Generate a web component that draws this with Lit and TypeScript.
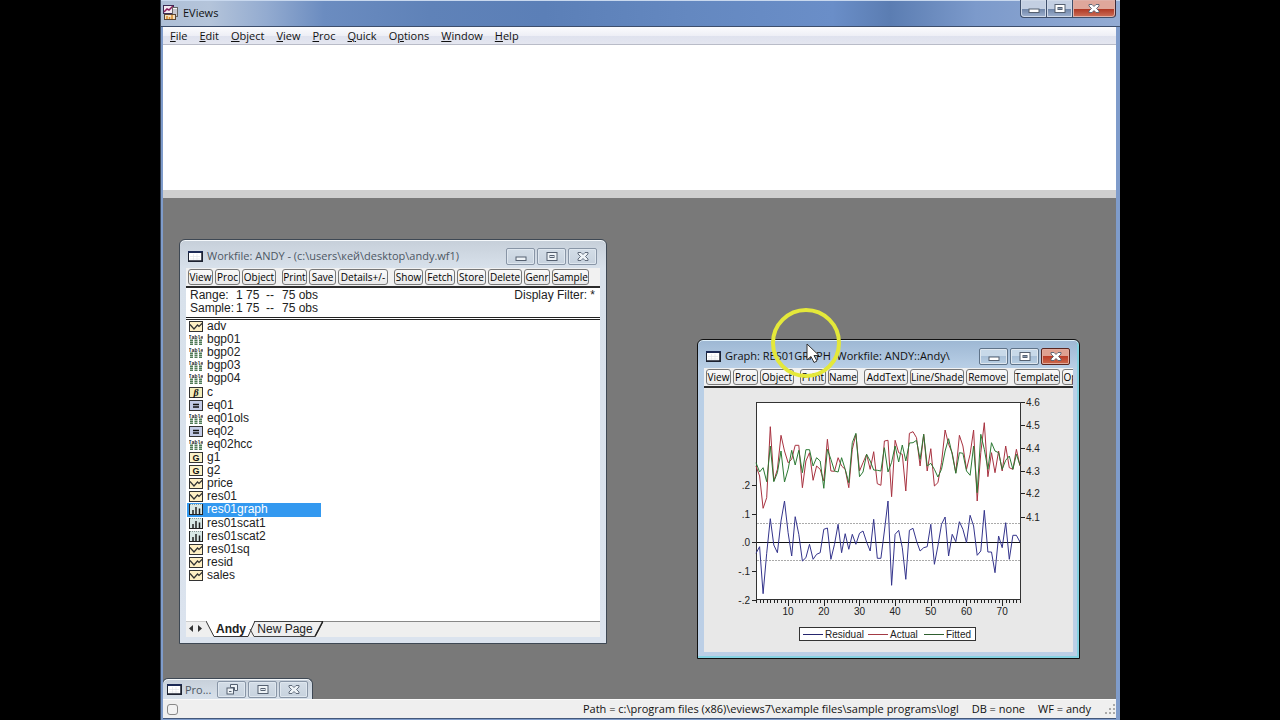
import { LitElement, html, svg, css } from "lit";
import { customElement, property } from "lit/decorators.js";
import { classMap } from "lit/directives/class-map.js";

type Kind = "series" | "table" | "coef" | "equation" | "group" | "graph";

const MENU = ["File", "Edit", "Object", "View", "Proc", "Quick", "Options", "Window", "Help"];

const WORKFILE_TOOLS: [string, number][][] = [
  [["View", 25], ["Proc", 25], ["Object", 34]],
  [["Print", 25], ["Save", 27], ["Details+/-", 50]],
  [["Show", 29], ["Fetch", 30], ["Store", 29], ["Delete", 34], ["Genr", 26], ["Sample", 37]],
];

const GRAPH_TOOLS: [string, number][][] = [
  [["View", 25], ["Proc", 25], ["Object", 34]],
  [["Print", 26], ["Name", 30]],
  [["AddText", 44], ["Line/Shade", 54], ["Remove", 42]],
  [["Template", 46], ["Options", 40]],
];

const OBJECTS: [Kind, string][] = [
  ["series", "adv"],
  ["table", "bgp01"],
  ["table", "bgp02"],
  ["table", "bgp03"],
  ["table", "bgp04"],
  ["coef", "c"],
  ["equation", "eq01"],
  ["table", "eq01ols"],
  ["equation", "eq02"],
  ["table", "eq02hcc"],
  ["group", "g1"],
  ["group", "g2"],
  ["series", "price"],
  ["series", "res01"],
  ["graph", "res01graph"],
  ["graph", "res01scat1"],
  ["graph", "res01scat2"],
  ["series", "res01sq"],
  ["series", "resid"],
  ["series", "sales"],
];

/* Plot heights of the 75 observations, three units to a pixel, 33 is the top of the frame. */
const RESIDUAL = [
  487, 467, 608, 487, 383, 462, 485, 390, 330, 425, 495, 377, 430, 510, 500, 460, 505, 490, 485, 415,
  411, 505, 460, 400, 485, 428, 475, 430, 460, 427, 420, 453, 480, 385, 502, 502, 420, 330, 583, 430,
  418, 470, 565, 418, 412, 450, 480, 470, 467, 400, 520, 465, 400, 378, 495, 430, 452, 392, 415, 455,
  373, 405, 493, 480, 358, 483, 483, 545, 435, 470, 395, 505, 433, 433, 453,
];
const ACTUAL = [
  225, 255, 352, 320, 107, 270, 235, 133, 180, 215, 205, 163, 163, 290, 210, 185, 268, 225, 235, 270,
  145, 240, 241, 200, 225, 235, 290, 175, 130, 240, 215, 190, 235, 182, 278, 283, 150, 148, 317, 148,
  185, 190, 300, 127, 122, 140, 225, 130, 240, 173, 285, 275, 215, 117, 160, 185, 245, 133, 165, 235,
  190, 117, 330, 185, 95, 257, 185, 245, 180, 240, 165, 230, 235, 175, 225,
];
const FITTED = [
  215, 243, 230, 272, 165, 272, 245, 180, 273, 235, 178, 222, 178, 245, 176, 176, 225, 200, 210, 292,
  175, 205, 240, 243, 200, 235, 275, 155, 127, 257, 243, 190, 210, 237, 238, 240, 170, 243, 214, 165,
  213, 162, 210, 156, 155, 148, 205, 130, 225, 217, 235, 258, 235, 180, 143, 190, 247, 185, 187, 240,
  253, 165, 305, 130, 175, 235, 155, 180, 185, 235, 208, 195, 235, 190, 223,
];

const obsX = (i: number) => 52 + ((i - 1) * 264) / 74;
const line = (s: number[]) => s.map((v, i) => `${obsX(i + 1).toFixed(1)},${(v / 3 + 3).toFixed(1)}`).join(" ");

const objectIcon = (kind: Kind) => {
  switch (kind) {
    case "series":
      return html`<svg width="14" height="11" viewBox="0 0 14 11"><rect x=".5" y=".5" width="13" height="10" fill="#fff0c4" stroke="#333"/><path d="M1 3.5l4 4.500 3.500-4 1.500 1.500 3.500-3.500" fill="none" stroke="#333" stroke-width="1.200"/></svg>`;
    case "table":
      return html`<svg width="14" height="11" viewBox="0 0 14 11"><text x="-.5" y="4.500" font-family="Liberation Mono" font-weight="700" font-size="5" fill="#222">Table</text><path d="M1 6.300h12M1 8.300h12M1 10.300h12" stroke="#4f7a56" stroke-width="1.400" stroke-dasharray="3 1.500"/></svg>`;
    case "coef":
      return html`<svg width="14" height="11" viewBox="0 0 14 11"><rect x=".5" y=".5" width="13" height="10" fill="#f4eebc" stroke="#333"/><text x="7" y="8.500" text-anchor="middle" font-family="Liberation Serif" font-style="italic" font-weight="700" font-size="10" fill="#111">β</text></svg>`;
    case "equation":
      return html`<svg width="14" height="11" viewBox="0 0 14 11"><rect x=".5" y=".5" width="13" height="10" fill="#c3cbe6" stroke="#333"/><path d="M4 4.500h6M4 7h6" stroke="#111" stroke-width="1.400"/></svg>`;
    case "group":
      return html`<svg width="14" height="11" viewBox="0 0 14 11"><rect x=".5" y=".5" width="13" height="10" fill="#fbf2c8" stroke="#333"/><text x="7" y="8.700" text-anchor="middle" font-family="Liberation Sans" font-weight="700" font-size="9" fill="#111">G</text></svg>`;
    case "graph":
      return html`<svg width="14" height="11" viewBox="0 0 14 11"><rect width="14" height="11" fill="#d9e9e6"/><path d="M.5 0v11M0 10.500h14M13.500 0v11" stroke="#222" fill="none"/><path d="M1 .5h12" stroke="#8a9a98" stroke-dasharray="1 1"/><path d="M4 10V6M7 10V3M10.500 10V4.500" stroke="#222" stroke-width="1.500"/></svg>`;
  }
};

const sheetIcon = html`<svg width="15" height="11" viewBox="0 0 15 11"><rect x=".5" y=".5" width="14" height="10" fill="#fff" stroke="#1c2230"/><path d="M0 1h15" stroke="#1c2a55" stroke-width="2"/><path d="M14 1v10M1 10h14" stroke="#1c2230" stroke-width="1.500"/><path d="M2 5.500h10M2 8h10M5.500 3v6M9 3v6" stroke="#dde0e6" stroke-width=".6"/></svg>`;

@customElement("caption-buttons")
export class CaptionButtons extends LitElement {
  @property() variant: "plain" | "active" | "docked" | "main" = "plain";

  static styles = css`
    :host { display: flex; gap: 2px; }
    button {
      width: 29px; height: 17px; padding: 0; display: grid; place-items: center;
      border: 1px solid #8895a6; border-radius: 2px; box-sizing: border-box;
      background: linear-gradient(#d3dde7, #c7d2de);
      box-shadow: inset 0 0 0 1px #dfe7ef;
    }
    svg { display: block; }
    .active { background: linear-gradient(#c8d9e9 45%, #a9c0d8 50%, #bad0e4); border-color: #5f7389; }
    .active.close { background: linear-gradient(#dfa191 45%, #bc3f2a 50%, #cc6a4d); border-color: #5a2620; box-shadow: inset 0 0 0 1px #e2ab9d; }
    :host([variant="main"]) { gap: 0; }
    .main {
      width: 26px; height: 18px; border-color: #3e4f6b; border-top: 0; border-radius: 0; border-right: 0;
      background: linear-gradient(#c3cfe2 50%, #7187a9 55%, #9fb2d0); box-shadow: inset 0 0 0 1px #cfd9e8;
    }
    .main.minimize { border-radius: 0 0 0 4px; }
    .main.close {
      width: 44px; border-right: 1px solid #3e2a35; border-radius: 0 0 4px 0;
      background: linear-gradient(#dfa79b 50%, #b03a26 55%, #cd705a); box-shadow: inset 0 0 0 1px #dfb0a8;
    }
  `;

  render() {
    const v = this.variant;
    const solid = v === "active" || v === "main";
    const ink = "#556070";
    const fill = solid ? "#fff" : "#eef3f7";
    const c = (name: string) => classMap({ [v]: true, [name]: true });
    return html`
      <button class=${c("minimize")} aria-label=${v === "docked" ? "Restore" : "Minimize"}>
        ${v === "docked"
          ? html`<svg width="12" height="11" viewBox="0 0 12 11"><path d="M4.500.5h7v6h-3v-3h-4z" fill=${fill} stroke=${ink}/><rect x="1" y="4" width="6.500" height="6" fill=${fill} stroke=${ink}/><path d="M3 7.500h2.500" stroke=${ink}/></svg>`
          : html`<svg width="12" height="11" viewBox="0 0 12 11"><rect x="1" y="6" width="10" height="3.500" fill=${fill} stroke=${ink}/></svg>`}
      </button>
      <button class=${c("maximize")} aria-label="Maximize">
        <svg width="12" height="11" viewBox="0 0 12 11"><rect x="1" y="1.500" width="10" height="8" fill=${fill} stroke=${ink}/><rect x="4" y="4.500" width="4" height="2" fill=${solid ? "#8899b0" : "#dfe6ee"} stroke=${ink}/></svg>
      </button>
      <button class=${c("close")} aria-label="Close">
        <svg width="12" height="11" viewBox="0 0 12 11"><path d="M1 1.500h3l2 2 2-2h3v1.500L8.500 5.500 11 8v1.500H8l-2-2-2 2H1V8l2.500-2.500L1 3z" fill=${fill} stroke=${ink} stroke-width=".9"/></svg>
      </button>`;
  }
}

@customElement("tool-strip")
export class ToolStrip extends LitElement {
  @property({ attribute: false }) groups: [string, number][][] = [];

  static styles = css`
    :host {
      display: flex; gap: 6px; height: 20px; padding: 1px 1px 1px 2px; box-sizing: border-box; overflow: hidden;
      background: #f1f1f1; border-bottom: 2px solid #2b2b2b;
    }
    .group { display: flex; gap: 2px; flex: none; }
    button {
      flex: none; height: 16px; padding: 0; box-sizing: border-box; white-space: nowrap;
      display: flex; justify-content: center; align-items: center;
      border: 1px solid #777; border-radius: 3px; background: linear-gradient(#fafafa, #e9e9e9);
      font: 10px/14px "Open Sans", "Noto Sans", sans-serif; color: #000;
    }
  `;

  render() {
    return this.groups.map(
      (g) => html`<div class="group">
        ${g.map(([label, width]) => html`<button style="width:${width}px">${label}</button>`)}
      </div>`
    );
  }
}

@customElement("residual-chart")
export class ResidualChart extends LitElement {
  static styles = css`
    :host { display: block; background: #e8e8e8; }
    svg { display: block; }
    text { font: 10px "Liberation Sans", Arial, sans-serif; fill: #222; }
  `;

  render() {
    const ticks = Array.from({ length: 75 }, (_, i) => i + 1);
    const left: [string, number][] = [[".2", 97], [".1", 126], [".0", 154], ["-.1", 183], ["-.2", 212]];
    const right: [string, number][] = [["4.6", 14], ["4.5", 37], ["4.4", 60], ["4.3", 83], ["4.2", 105], ["4.1", 129]];
    const legend: [string, string, number][] = [["Residual", "#26266e", 99], ["Actual", "#a33a44", 164], ["Fitted", "#2f5f2f", 220]];
    return html`<svg width="368" height="264" viewBox="0 0 368 264" role="img" aria-label="Residual, Actual, Fitted">
      <rect x="52.5" y="14.500" width="264" height="197" fill="#fff" stroke="#333"/>
      <path d="M53 135.500h263M53 172.500h263" stroke="#aaa" stroke-dasharray="2 1"/>
      <path d="M53 154.500h263" stroke="#111"/>
      <polyline points=${line(ACTUAL)} fill="none" stroke="#a83240"/>
      <polyline points=${line(FITTED)} fill="none" stroke="#2c7a34"/>
      <polyline points=${line(RESIDUAL)} fill="none" stroke="#34348c"/>
      ${ticks.map((i) => svg`<path d="M${Math.round(obsX(i)) + 0.5} 212v${i % 10 ? 3 : 6}" stroke="#222"/>`)}
      ${[10, 20, 30, 40, 50, 60, 70].map((i) => svg`<text x=${obsX(i)} y="227" text-anchor="middle">${i}</text>`)}
      ${left.map(([t, y]) => svg`<path d="M48 ${y + 0.5}h4" stroke="#222"/><text x="46" y=${y + 4} text-anchor="end">${t}</text>`)}
      ${right.map(([t, y]) => svg`<path d="M317 ${y + 0.5}h4" stroke="#222"/><text x="322" y=${y + 4}>${t}</text>`)}
      <rect x="95.500" y="239.500" width="176" height="13" fill="#fff" stroke="#333"/>
      ${legend.map(([t, c, x]) => svg`<path d="M${x} 246.500h20" stroke=${c}/><text x=${x + 22} y="250">${t}</text>`)}
    </svg>`;
  }
}

@customElement("app-root")
export class AppRoot extends LitElement {
  static styles = css`
    :host {
      display: block; height: 100vh; box-sizing: border-box; padding: 0 12.5%; overflow: hidden; background: #000;
      font: 11px/16px "Open Sans", "Noto Sans", sans-serif; color: #111;
    }
    button { font: inherit; color: inherit; border: 0; background: none; padding: 0; }
    svg { display: block; }
    .frame {
      height: 100%; box-sizing: border-box; display: flex; flex-direction: column;
      padding: 0 4px 1px 2px; border-left: 1px solid #3a4658; background: #7f9ccb;
    }
    .titlebar {
      height: 27px; flex: none; display: flex; align-items: flex-start; margin: 0 -4px 0 -2px; padding: 0 4px 0 2px;
      box-sizing: border-box; border-bottom: 1px solid #3d4e6c;
      background: linear-gradient(#c8d8ee 0, #c8d8ee 1px, transparent 1px),
        linear-gradient(90deg, #aebfd7 0, #b4c4da 5%, #93abd0 11%, #6b8cc0 17%, #5f82b8 28%, #5b7fb7 40%, #6488c0 55%, #6a8ec8 70%, #5b7db2 76%, #7c9acb 85%, #93abd3 100%);
    }
    .brand { display: flex; gap: 5px; flex: 1; padding-top: 5px; }
    .menu { display: flex; flex: none; gap: 12px; height: 18px; padding: 0 7px; box-sizing: border-box; border-bottom: 1px solid #b9bcc8; background: linear-gradient(#fbfbfd 0, #eeeff6 50%, #dfe2ee 55%, #e4e6f0); }
    .command { height: 145px; flex: none; background: #fff; box-sizing: border-box; border: 0; padding: 0; margin: 0; resize: none; width: 100%; }
    .splitter { height: 8px; flex: none; background: #cfcfcf; }
    .desktop { flex: 1; min-height: 0; position: relative; background: #797979; overflow: hidden; }
    .status { height: 20px; flex: none; display: flex; justify-content: flex-end; align-items: center; gap: 13px; padding: 0 1px 0 4px; box-sizing: border-box; border-bottom: 1px solid #44587a; border-top: 1px solid #fafafa; background: #efefef; }
    .lamp { width: 11px; height: 11px; margin-right: auto; box-sizing: border-box; border: 1px solid #888; border-radius: 3px; background: #f2f2f2; }

    .window {
      position: absolute; box-sizing: border-box; display: flex; flex-direction: column; padding: 0 6px 6px;
      border: 1px solid #3e4854; border-radius: 6px 6px 0 0; box-shadow: inset 0 1px 0 #f4f8fb;
    }
    .workfile { left: 16px; top: 41px; width: 428px; height: 405px; background: linear-gradient(#c6cfd9, #d8e1eb 28px, #dbe3ee); color: #4d5763; }
    .graph { left: 534px; top: 141px; width: 383px; height: 320px; background: linear-gradient(#9db7d3, #b9cfe6 28px, #bccfe6); border-color: #111; box-shadow: inset 0 1px 0 #dff0fa, inset -2px -2px 0 #85d3e2; }
    .docked { left: -1px; bottom: 0; width: 151px; height: 21px; padding: 0; border-bottom: 0; background: linear-gradient(#c6cfd9, #d8e1eb); color: #4d5763; }
    .caption { display: flex; align-items: center; height: 28px; flex: none; gap: 4px; padding: 4px 3px 0 2px; box-sizing: border-box; }
    .docked .caption { height: 20px; gap: 3px; padding: 1px 4px 0 4px; }
    .caption span { flex: 1; white-space: pre; }
    .client { flex: 1; min-height: 0; display: flex; flex-direction: column; background: #fff; color: #222; font: 12px/13px "Liberation Sans", Arial, sans-serif; }
    .graph .client { background: #e8e8e8; overflow: hidden; }
    .info { display: flex; justify-content: space-between; height: 32px; flex: none; box-sizing: border-box; padding: 1px 5px 0 4px; border-bottom: 3px double #222; }
    .sample { display: grid; grid-template-columns: 46px 30px 16px auto; align-content: start; white-space: pre; }
    .objects { list-style: none; display: grid; grid-auto-rows: 1fr; height: 262px; flex: none; margin: 0; padding: 0 0 0 1px; }
    .objects button { width: 134px; height: 100%; display: flex; align-items: center; gap: 4px; padding: 0 2px; box-sizing: border-box; }
    .objects .selected { background: #3399f0; color: #fff; }
    .tabs { display: flex; align-items: stretch; height: 16px; margin-top: auto; flex: none; background: #efefef; }
    .rest { flex: 1; border-top: 1px solid #888; }
    .tabs button { display: grid; }
    .tabs button > * { grid-area: 1 / 1; }
    .tabs span { align-self: center; justify-self: center; }
    .tab-on { font-weight: 700; }
    .tab-off { margin-left: -10px; }
    .pointer { position: absolute; left: 606px; top: 108px; pointer-events: none; }
  `;

  render() {
    return html`
      <div class="frame">
        <header class="titlebar">
          <div class="brand">
            <svg width="15" height="15" viewBox="0 0 15 15"><rect x="0.500" y=".5" width="10" height="8" fill="#f4eaf2" stroke="#3a2c55"/><path d="M1 7l3-3 2 1 4-4" stroke="#8b1f5c" stroke-width="1.500" fill="none"/><rect x="9.500" y="2.500" width="5" height="9" fill="#f5f5f5" stroke="#666"/><path d="M11 4v7M13 4v7" stroke="#99a"/><rect x="1.500" y="9.500" width="11" height="5" fill="#f6e2c0" stroke="#5a4636"/><path d="M4 14v-3M6.500 14v-2M9 14v-4" stroke="#d98a2c" stroke-width="1.500"/></svg>
            <span>EViews</span>
          </div>
          <caption-buttons variant="main"></caption-buttons>
        </header>
        <nav class="menu">
          ${MENU.map((m) => (m === "Options" ? html`<button>O<u>p</u>tions</button>` : html`<button><u>${m[0]}</u>${m.slice(1)}</button>`))}
        </nav>
        <textarea class="command" aria-label="Command"></textarea>
        <div class="splitter"></div>
        <main class="desktop">
          <section class="window workfile">
            <div class="caption">${sheetIcon}<span>Workfile: ANDY - (c:\\users\\кей\\desktop\\andy.wf1)</span><caption-buttons></caption-buttons></div>
            <div class="client">
              <tool-strip .groups=${WORKFILE_TOOLS}></tool-strip>
              <div class="info">
                <div class="sample">
                  <span>Range:</span><span>1 75</span><span>--</span><span>75 obs</span>
                  <span>Sample:</span><span>1 75</span><span>--</span><span>75 obs</span>
                </div>
                <span>Display Filter: *</span>
              </div>
              <ul class="objects">
                ${OBJECTS.map(
                  ([kind, name]) => html`<li><button class=${classMap({ selected: name === "res01graph" })}>${objectIcon(kind)}<span>${name}</span></button></li>`
                )}
              </ul>
              <div class="tabs">
                <svg width="20" height="16" viewBox="0 0 20 16"><path d="M0 .5h20" stroke="#ccc"/><path d="M7 4v7L3 7.500zM12 4v7l4-3.500z" fill="#333"/></svg>
                <button class="tab-on"><svg width="50" height="16" viewBox="0 0 50 16"><path d="M0 0l8 15.500h34L49 0z" fill="#fff"/><path d="M0 0l8 15.500h34L49 0" fill="none" stroke="#333"/></svg><span>Andy</span></button>
                <button class="tab-off"><svg width="78" height="16" viewBox="0 0 78 16"><path d="M4 8l4 7.500h61L77 .5H8" fill="none" stroke="#444"/><path d="M69 15.500L77 0" stroke="#222" stroke-width="1.500"/></svg><span>New Page</span></button>
                <div class="rest"></div>
              </div>
            </div>
          </section>

          <section class="window graph">
            <div class="caption">${sheetIcon}<span>Graph: RES01GRAPH  Workfile: ANDY::Andy\\</span><caption-buttons variant="active"></caption-buttons></div>
            <div class="client">
              <tool-strip .groups=${GRAPH_TOOLS}></tool-strip>
              <residual-chart></residual-chart>
            </div>
          </section>

          <section class="window docked">
            <div class="caption">${sheetIcon}<span>Pro...</span><caption-buttons variant="docked"></caption-buttons></div>
          </section>

          <svg class="pointer" width="74" height="74" viewBox="0 0 74 74">
            <circle cx="37" cy="37" r="33" fill="none" stroke="#e4e83a" stroke-width="4"/>
            <path d="M38 38v16l4-3.500 3 6 3-1.500-3-5.500h5z" fill="#fff" stroke="#333"/>
          </svg>
        </main>
        <footer class="status">
          <span class="lamp"></span>
          <span>Path = c:\\program files (x86)\\eviews7\\example files\\sample programs\\logl</span>
          <span>DB = none</span>
          <span>WF = andy</span>
          <svg width="11" height="11" viewBox="0 0 11 11"><path d="M9 1h2M9 5h2M5 5h2M9 9h2M5 9h2M1 9h2" stroke="#aaa" stroke-width="2"/></svg>
        </footer>
      </div>`;
  }
}
